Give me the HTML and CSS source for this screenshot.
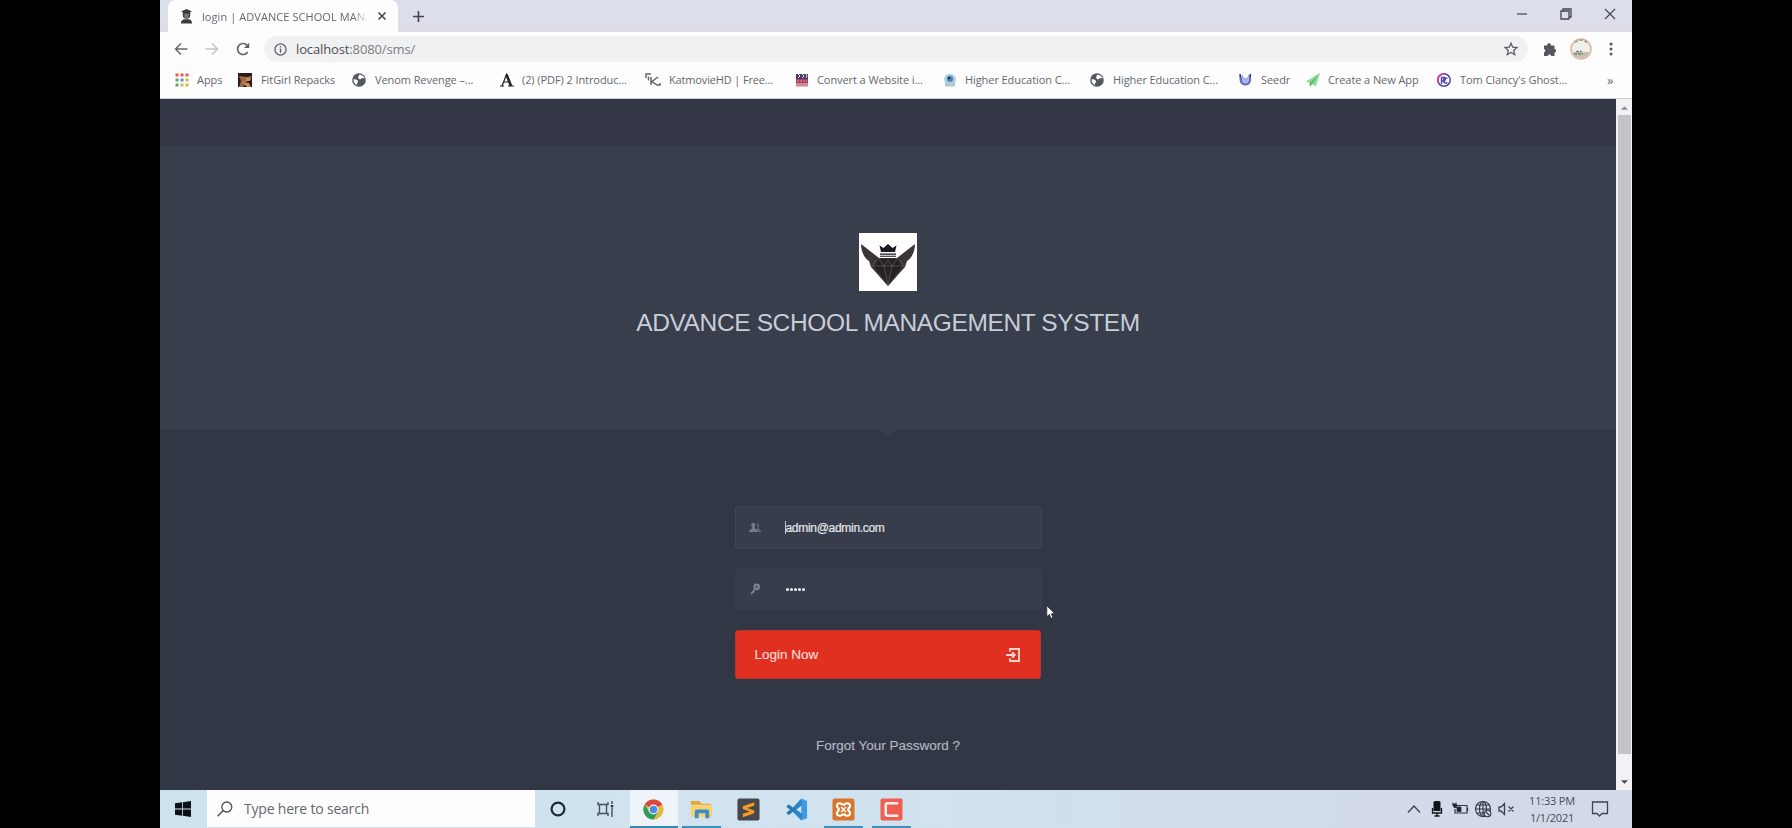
FILE: index.html
```html
<!DOCTYPE html>
<html lang="en">
<head>
<meta charset="utf-8">
<title>login | ADVANCE SCHOOL MANAGEMENT SYSTEM</title>
<link rel="stylesheet" href="styles.css">
</head>
<body>
<div class="desktop">
  <header class="tabstrip">
    <div class="tab">
      <svg class="tab-icon" viewBox="0 0 14 16"><path fill="#3c3c40" d="M7 0l6 2.500-2 1V6.500a4 4 0 0 1-8 0V3.500L1 2.500zM1 15.500c0-3 2-4.500 4-4.500h4c2 0 4 1.500 4 4.500z"/><path fill="#77777b" d="M4.500 5h5v2.500a2.500 2.500 0 0 1-5 0z"/></svg>
      <span class="tab-title">login | ADVANCE SCHOOL MANA</span>
      <svg class="tab-close" viewBox="0 0 8 8"><path d="M.5.5l7 7M7.500.5l-7 7" stroke="#45464b" stroke-width="1.600"/></svg>
    </div>
    <svg class="new-tab" viewBox="0 0 12 12"><path d="M6 0v12M0 6h12" stroke="#45464b" stroke-width="1.800"/></svg>
    <div class="window-buttons">
      <svg viewBox="0 0 12 12"><path d="M1 6h10" stroke="#44464c" stroke-width="1.200"/></svg>
      <svg viewBox="0 0 12 12"><path d="M1 3h8v8H1zM3 3V1h8v8H9" fill="none" stroke="#44464c" stroke-width="1.300"/></svg>
      <svg viewBox="0 0 12 12"><path d="M1 1l10 10M11 1L1 11" stroke="#44464c" stroke-width="1.200"/></svg>
    </div>
  </header>

  <nav class="toolbar">
    <div class="nav-buttons">
      <svg viewBox="0 0 14 14"><path d="M13.500 7H1.500M7 1.500L1.500 7 7 12.500" fill="none" stroke="#66686c" stroke-width="1.500"/></svg>
      <svg viewBox="0 0 14 14"><path d="M.5 7h12M7 1.500L12.500 7 7 12.500" fill="none" stroke="#c3c4c8" stroke-width="1.500"/></svg>
      <svg viewBox="0 0 14 14"><path d="M11.700 10A5.500 5.500 0 1 1 11.300 3.500L12.500 5" fill="none" stroke="#5f6165" stroke-width="1.600"/><path d="M13.200.8v5.200H8z" fill="#5f6165"/></svg>
    </div>
    <div class="omnibox">
      <svg class="info" viewBox="0 0 14 14"><circle cx="7" cy="7" r="6" fill="none" stroke="#5f6165" stroke-width="1.400"/><path d="M7 6v4.500M7 3.400v1.500" stroke="#5f6165" stroke-width="1.500"/></svg>
      <span class="url"><b>localhost</b>:8080/sms/</span>
      <svg class="star" viewBox="0 0 14 14"><path d="M7 1.200l1.700 4 4.300.4-3.300 2.800 1 4.300L7 10.400l-3.700 2.300 1-4.300L1 5.600l4.300-.4z" fill="none" stroke="#5c5e63" stroke-width="1.300"/></svg>
    </div>
    <svg class="puzzle" viewBox="0 0 14 14"><path fill="#55575c" d="M1 3.500h3.300a1.800 1.800 0 1 1 3.500 0H11.500V7a1.700 1.700 0 1 1 0 3.400V14H8.300a1.800 1.800 0 0 0-3.500 0H1v-3.700a1.700 1.700 0 0 0 0-3.300z"/></svg>
    <svg class="avatar" viewBox="0 0 22 22"><circle cx="11" cy="11" r="10" fill="#eef0ec" stroke="#e0b592" stroke-width="1.500"/><path d="M2.500 14h17a9 9 0 0 1-17 0z" fill="#c2c0b6"/><path d="M4 16h9M6 13.500h6" stroke="#7b817c" stroke-width="1.300" stroke-dasharray="3 1"/><path d="M5 4.500A9 9 0 0 1 17 4.500" stroke="#8f989a" stroke-width="1.500" stroke-dasharray="3 2" fill="none"/></svg>
    <svg class="kebab" viewBox="0 0 4 14"><g fill="#55575c"><circle cx="2" cy="2" r="1.500"/><circle cx="2" cy="7" r="1.500"/><circle cx="2" cy="12" r="1.500"/></g></svg>
  </nav>

  <nav class="bookmarks">
    <a><svg viewBox="0 0 14 14"><path fill="#e0604f" d="M.5.5h3v3h-3zM5.500.5h3v3h-3zM10.500.5h3v3h-3z"/><path fill="#5ba377" d="M.5 5.500h3v3h-3z"/><path fill="#5a8fd0" d="M5.500 5.500h3v3h-3z"/><path fill="#e3b04a" d="M10.500 5.500h3v3h-3zM5.500 10.500h3v3h-3zM10.500 10.500h3v3h-3z"/><path fill="#5ba377" d="M.5 10.500h3v3h-3z"/></svg>Apps</a>
    <a class="wide-gap"><svg viewBox="0 0 14 14"><path fill="#2a1c18" d="M0 0h14v14H0z"/><path fill="#a06a46" d="M1 3l8 1 4-1v4l-5 2-3 5H1l2-6z"/><path fill="#c58c60" d="M8 5h4v3H8zM4 9l7 1 2 4H9z"/></svg>FitGirl Repacks</a>
    <a class="wide-gap"><svg viewBox="0 0 14 14"><circle cx="7" cy="7" r="6.800" fill="#55585d"/><path fill="#fff" d="M1.500 6.500c2-.5 4.500.5 4.500 2S4.500 10 5 12C3 11.500 1.300 9 1.500 6.500zM7 2c2-.6 5 1 5.500 3.500L10 5 8 6.500 6 5z"/></svg>Venom Revenge –...</a>
    <a><svg viewBox="0 0 14 14"><path d="M2 13L6.500 1.500 11 13M3.500 9h5M0 13h4M8 13h6" fill="none" stroke="#222" stroke-width="1.200"/><path d="M6.500 1.500L11 13" stroke="#222" stroke-width="2.600"/></svg>(2) (PDF) 2 Introduc...</a>
    <a class="wide-gap katmovie"><svg viewBox="0 0 14 14"><path d="M0 5V1h5M5 4v8M12 4L6 8.500l5 3.500h3v-2M2.500 3.500v4" fill="none" stroke="#66676b" stroke-width="1.500"/></svg>KatmovieHD | Free...</a>
    <a><svg viewBox="0 0 14 14"><path fill="#3d3a6d" d="M1 1h12v5H1z"/><path fill="#b53a56" d="M1 6h12v4H1z"/><path fill="#c88b9a" d="M1 10h12v3.500H1z"/><path d="M3 1l2 2-2 2M7 1l2 2-2 2M11 1l1 2-1 2" stroke="#e9ddea" fill="none"/><path d="M2 8h10" stroke="#d795a5" stroke-dasharray="2 1"/></svg>Convert a Website i...</a>
    <a><svg viewBox="0 0 14 14"><path d="M2 9h10v4.500H2z" fill="#b9c5c5"/><circle cx="7" cy="6.500" r="5.800" fill="#a7cfdf"/><circle cx="7" cy="6" r="3" fill="#5580ac"/><circle cx="6" cy="5" r="1.200" fill="#16305f"/></svg>Higher Education C...</a>
    <a class="wide-gap"><svg viewBox="0 0 14 14"><circle cx="7" cy="7" r="6.800" fill="#55585d"/><path fill="#fff" d="M1.500 6.500c2-.5 4.500.5 4.500 2S4.500 10 5 12C3 11.500 1.300 9 1.500 6.500zM7 2c2-.6 5 1 5.500 3.500L10 5 8 6.500 6 5z"/></svg>Higher Education C...</a>
    <a class="wide-gap"><svg viewBox="0 0 14 14"><path d="M2 1c-1.500 6 0 11.500 5.500 11.500S14 7 12.500 1L10.500 5h-6z" fill="#6d68b8"/><path d="M4 1.500h7V7a3.500 3.500 0 0 1-7 0z" fill="#a9b4ea"/><path d="M5 1h5v1.500a2.500 2.500 0 0 1-5 0z" fill="#fff"/><path d="M2 1l.5 3M12.500 1L12 4" stroke="#33345f" stroke-width="1.500"/></svg>Seedr</a>
    <a><svg viewBox="0 0 14 14"><path fill="#8fdc94" d="M14 0L0 8.500l3.500 1.500zM14 0L5 11l5 2z"/><path fill="#55b866" d="M14 0L3.500 10 4 14l2-3z"/></svg>Create a New App</a>
    <a class="wide-gap"><svg viewBox="0 0 14 14"><circle cx="7" cy="7" r="6.200" fill="#fff" stroke="#5b3fa0" stroke-width="1.500"/><path d="M1 9a6 6 0 0 1 5-8" stroke="#dc3f83" stroke-width="1.700" fill="none"/><path d="M4.500 11V4.500H7a1.800 1.800 0 0 1 0 3.500H5M10.500 5.500a2.500 2.500 0 1 0 0 4" stroke="#4840b4" stroke-width="1.400" fill="none"/></svg>Tom Clancy's Ghost...</a>
    <span class="more">»</span>
  </nav>

  <div class="viewport">
    <main class="login-page">
      <section class="login-header">
        <svg class="logo" viewBox="0 0 58 58"><path fill="#fff" d="M0 0h58v58H0z"/><path fill="#3a3638" d="M2 11l18 14h18L56 11c0 7-3 14-8 17l-2 6-17 19L12 34l-2-6C5 25 2 18 2 11z"/><path fill="#262124" d="M20 26h18l5 7-14 20-14-20z"/><path fill="#1c1922" d="M22 19l-1.500-6.500 4 2.500L29 11l4.500 4 4-2.500L36 19zM21 20.500h16v1.300H21zM21 22.800h16v.9H21z"/><path d="M13 33h32M20 26l5 7 4 19 4-19 5-7M17 27l-3 5M41 27l3 5M25 33l4-6 4 6" fill="none" stroke="#6a6567" stroke-width=".6"/></svg>
        <h1>ADVANCE SCHOOL MANAGEMENT SYSTEM</h1>
      </section>
      <form class="login-form">
        <div class="field focused">
          <svg viewBox="0 0 14 14"><g fill="#747a86"><path d="M9.300 1.500c1.800 0 2.400 1.500 2.200 3-.1 1.200-.8 1.800-.8 2.700 0 1.300 3.300 1.300 3.300 4.300h-1.600c-.3-2-3-2.600-3-3.700 1.200-1.300.9-4.800-.1-6.300z"/><path d="M5 1c2 0 2.600 1.600 2.400 3.300C7.300 5.600 6.600 6.200 6.600 7c0 1.500 4.600 1.500 4.600 4.800H0C0 8.500 3.600 8.500 3.600 7c0-.8-.7-1.400-.8-2.700C2.500 2.600 3 1 5 1z"/></g></svg>
          <span class="caret"></span><span class="value">admin@admin.com</span>
        </div>
        <div class="field">
          <svg viewBox="0 0 14 14"><circle cx="9" cy="4.500" r="2.900" fill="#595f6c" stroke="#7d828e" stroke-width="2"/><path d="M7.500 6.500L2.500 13M4.500 9.500l1.500 1.500" stroke="#7d828e" stroke-width="2"/></svg>
          <span class="dots"><i></i><i></i><i></i><i></i><i></i></span>
        </div>
        <div class="button">
          <span>Login Now</span>
          <svg viewBox="0 0 14 14"><path d="M4 3.500V1h9v12H4v-2.500M0 7h8.500M6 4.300L8.800 7 6 9.700" fill="none" stroke="#fbd3cd" stroke-width="1.900"/></svg>
        </div>
      </form>
      <a class="forgot">Forgot Your Password ?</a>
    </main>
    <div class="scrollbar">
      <svg viewBox="0 0 8 4"><path d="M0 4l4-4 4 4z" fill="#8d8d91"/></svg>
      <div class="thumb"></div>
      <svg viewBox="0 0 8 4"><path d="M0 0l4 4 4-4z" fill="#4c4c50"/></svg>
    </div>
  </div>

  <footer class="taskbar">
    <div class="start"><svg viewBox="0 0 16 16"><path fill="#0c0f14" d="M0 2.300l7-1v6.300H0zM7.800 1.200L16 0v7.600H7.800zM0 8.400h7v6.300l-7-1zM7.800 8.400H16V16l-8.200-1.200z"/></svg></div>
    <div class="search">
      <svg viewBox="0 0 16 16"><circle cx="9.800" cy="6" r="5" fill="none" stroke="#4c4f54" stroke-width="1.300"/><path d="M6.200 9.600L.6 15.300" stroke="#4c4f54" stroke-width="1.400"/></svg>
      <span>Type here to search</span>
    </div>
    <div class="app"><svg class="small" viewBox="0 0 16 16"><circle cx="8" cy="8" r="6.400" fill="none" stroke="#1e2933" stroke-width="2.200"/></svg></div>
    <div class="app"><svg class="small" viewBox="0 0 16 16"><path d="M0 1v2.500h10V1M0 15v-2.500h10V15M1.500 3.500v9h7v-9M14 0v3M14 7v9" fill="none" stroke="#45505a" stroke-width="1.400"/><path d="M12.800 4h2.400v2.400h-2.400z" fill="#26313b"/></svg></div>
    <div class="app active"><svg viewBox="0 0 24 24"><circle cx="12" cy="12" r="10.500" fill="#e4b83f"/><path fill="#d94a3c" d="M12 12L2.900 6.750A10.500 10.500 0 0 1 21.100 6.750z"/><path fill="#2f9a5b" d="M2.900 6.750A10.500 10.500 0 0 0 12 22.500L16.500 14.500 12 12 7.500 14.500z"/><path fill="#d94a3c" d="M12 6.750h9.100L12 10z"/><circle cx="12" cy="12" r="5.200" fill="#f2f3f5"/><circle cx="12" cy="12" r="4" fill="#4a8be0"/></svg></div>
    <div class="app running"><svg viewBox="0 0 24 24"><path fill="#e0a53c" d="M1 3h9l2 3h10v6H1z"/><path fill="#f7d377" d="M1 7h22v13H1z"/><path fill="#3f8ec2" d="M5 21v-7q0-2 2-2h11q2 0 2 2v7h-4v-5H9v5z"/></svg></div>
    <div class="app"><svg viewBox="0 0 24 24"><rect x=".5" y=".5" width="23" height="23" rx="2" fill="#45474a"/><path fill="#f49b26" d="M6 8.500l12-4V8l-7.500 2.500L18 13v3L6 20v-3.500l7.500-2.500L6 11.500z"/></svg></div>
    <div class="app"><svg viewBox="0 0 24 24"><path d="M18 5L2.500 16.500M18 19L2.500 8" stroke="#2878b8" stroke-width="3.600"/><path fill="#3f9be0" d="M17 .5l6 2.500v18l-6 2.500z"/><path fill="#2b85cc" d="M17 .5L9 9l2.500 3L18 6.500zM17 23.500L9 15l2.500-3 6.500 5.500z"/></svg></div>
    <div class="app running"><svg viewBox="0 0 24 24"><rect x=".5" y=".5" width="23" height="23" rx="2.500" fill="#d9762b"/><path d="M8 5.500c2 0 2 1.500 4 1.500s2-1.500 4-1.500c3 0 3.500 3 2 4.500-1.500 1.300-1.500 2.700 0 4 1.500 1.500 1 4.500-2 4.500-2 0-2-1.500-4-1.500s-2 1.500-4 1.500c-3 0-3.500-3-2-4.500 1.500-1.300 1.500-2.700 0-4-1.500-1.500-1-4.500 2-4.500z" fill="none" stroke="#fff" stroke-width="2.300"/><path d="M9.500 9.500l5 5M14.500 9.500l-5 5" stroke="#fff" stroke-width="1.500"/></svg></div>
    <div class="app running"><svg viewBox="0 0 24 24"><rect x=".5" y=".5" width="23" height="23" rx="2" fill="#ee5f52"/><path d="M19 5.500H8Q6 5.500 6 7.500v9q0 2 2 2h11" fill="none" stroke="#fff0ed" stroke-width="2.600"/></svg></div>
    <div class="tray">
      <svg viewBox="0 0 18 18"><path d="M3 12.500L9 6l6 6.500" fill="none" stroke="#3e444f" stroke-width="1.400"/></svg>
      <svg viewBox="0 0 18 18"><path d="M5.500 2.500Q5.500 1 7 1h4Q12.500 1 12.500 2.500V11h-7z" fill="#11141a"/><path d="M4.500 8v5h9V8M9 13v3.500M6.500 16h5" fill="none" stroke="#11141a" stroke-width="1.300"/></svg>
      <svg viewBox="0 0 18 18"><path d="M6 5.500h10v7.500H4V9M16.500 8v3" fill="none" stroke="#2e343e" stroke-width="1.200"/><path d="M6 7h4v4.500H6zM1.500 4h4v3.500H3zM2 2.500V4M5 2.500V4" fill="#20252e" stroke="#20252e" stroke-width=".8"/></svg>
      <svg viewBox="0 0 18 18"><g fill="none" stroke="#2e343e" stroke-width="1.100"><circle cx="9" cy="9" r="7.500"/><ellipse cx="9" cy="9" rx="3.500" ry="7.500"/><path d="M9 1.500v15M1.500 9h15M2.500 5h13M2.500 13h13"/><circle cx="13.500" cy="13.500" r="3.300" fill="#d3d9e8"/><path d="M11.500 11.500l4 4"/></g></svg>
      <svg viewBox="0 0 18 18"><path d="M2 7v4h2l3.500 3.500v-11L4 7zM11.500 6.500l5 5M16.500 6.500l-5 5" fill="none" stroke="#3e444f" stroke-width="1.300"/></svg>
    </div>
    <div class="clock"><span>11:33 PM</span><span>1/1/2021</span></div>
    <div class="notify"><svg viewBox="0 0 18 18"><path d="M1.500 2h15v11.500H11L8.500 16 6 13.500H1.500z" fill="none" stroke="#3e444f" stroke-width="1.300"/></svg></div>
  </footer>

  <svg class="pointer" viewBox="0 0 12 18"><path d="M1 1v13l3-2.800L6 16l2.300-1-2-4.600h4.200z" fill="#fff" stroke="#20232c" stroke-width=".8"/></svg>
</div>
</body>
</html>
```
FILE: styles.css
```css
* { box-sizing: border-box; }
body { margin: 0; background: #000; font-family: "Open Sans", "Noto Sans", sans-serif; }
svg { display: block; flex: none; overflow: visible; }
.desktop { position: relative; width: 1472px; height: 828px; margin-left: 160px; display: flex; flex-direction: column; overflow: hidden; background: #fff; }

.tabstrip { height: 32px; flex: none; display: flex; align-items: center; padding-left: 8px; background: linear-gradient(#dbdeeb, #dcdeeb 60%, #dcdde3); }
.tab { width: 230px; height: 32px; display: flex; align-items: center; padding-left: 12px; background: #fdfdfe; border-radius: 8px 8px 0 0; }
.tab-icon { width: 13px; height: 15px; }
.tab-title { width: 165px; margin-left: 9px; overflow: hidden; white-space: nowrap; font-size: 11px; letter-spacing: .07px; color: #66676c; -webkit-mask-image: linear-gradient(90deg, #000 92%, transparent); mask-image: linear-gradient(90deg, #000 92%, transparent); }
.tab-close { width: 8px; height: 8px; margin-left: 11px; }
.new-tab { width: 11px; height: 11px; margin-left: 15px; }
.window-buttons { margin-left: auto; display: flex; gap: 32px; padding: 0 16px 4px 0; }
.window-buttons svg { width: 12px; height: 12px; }

.toolbar { height: 34px; flex: none; display: flex; align-items: center; padding-left: 14px; background: #fdfdfe; }
.nav-buttons { width: 90px; display: flex; gap: 17px; }
.nav-buttons svg { width: 14px; height: 14px; }
.omnibox { width: 1264px; height: 26px; display: flex; align-items: center; padding: 0 10px; border-radius: 13px; background: #f0f1f3; }
.info { width: 13px; height: 13px; }
.url { margin-left: 9px; font-size: 13px; line-height: 18px; letter-spacing: -.13px; color: #7a7b80; }
.url b { font-weight: 400; color: #4b4c50; }
.star { width: 14px; height: 14px; margin-left: auto; }
.puzzle { width: 14px; height: 14px; margin-left: 15px; }
.avatar { width: 22px; height: 22px; margin-left: 13px; }
.kebab { width: 4px; height: 14px; margin-left: 17px; }

.bookmarks { height: 33px; flex: none; display: grid; grid-template-columns: 63px 114px 148px 146px 149px 148px 147px 148px 68px 131px 170px 20px; align-items: center; padding: 0 0 5px 15px; border-bottom: 1px solid #c9cdd4; background: #fdfdfe; font-size: 11px; color: #66676c; }
.bookmarks a { display: flex; align-items: center; gap: 8px; white-space: nowrap; letter-spacing: -.08px; }
.bookmarks .wide-gap { gap: 9px; }
.bookmarks .katmovie { letter-spacing: -.15px; }
.bookmarks svg { width: 14px; height: 14px; }
.more { font-size: 13px; line-height: 14px; }

.viewport { height: 691px; flex: none; display: flex; }
.login-page { width: 1456px; padding-top: 47px; background: linear-gradient(#343745 0, #343745 47px, #303643 48px, #323745); font-family: "Liberation Sans", Arial, sans-serif; display: flex; flex-direction: column; align-items: center; }
.login-header { position: relative; width: 100%; height: 284px; flex: none; padding-top: 87px; display: flex; flex-direction: column; align-items: center; background: #383e4b; }
.login-header::after { content: ""; position: absolute; left: 718px; top: 284px; border: 10px solid transparent; border-top: 8px solid #363c49; border-bottom: 0; }
.logo { width: 58px; height: 58px; }
h1 { margin: 17px 0 0; font-size: 24.500px; line-height: 30px; letter-spacing: -.37px; font-weight: 400; color: #c8cdd8; white-space: nowrap; }
.login-form { width: 307px; margin-top: 76px; display: flex; flex-direction: column; }
.field { height: 42px; margin-bottom: 20px; padding-left: 13px; display: flex; align-items: center; background: #383d4b; border-radius: 3px; border: 1px solid #373c49; }
.field.focused { height: 43px; margin-bottom: 19px; border-color: #404551; }
.field svg { width: 12px; height: 12px; }
.caret { width: 1px; height: 13px; margin-left: 24px; background: #c5c8d0; }
.value { font-size: 12px; letter-spacing: -.3px; color: #e4e6ec; -webkit-text-stroke: .2px #e4e6ec; }
.dots { display: flex; gap: 1px; margin-left: 25px; }
.dots i { width: 3px; height: 3px; border-radius: 50%; background: #f0f1f5; }
.button { width: 306px; height: 49px; display: flex; align-items: center; justify-content: space-between; padding: 0 20px 0 19px; background: #e1301f; border: 1px solid #b93431; border-radius: 3px; color: #fbdad5; font-size: 13.500px; -webkit-text-stroke: .2px #fbdad5; }
.button svg { width: 14px; height: 14px; }
.forgot { margin-top: 59px; font-size: 13.500px; line-height: 16px; color: #b3b8c4; -webkit-text-stroke: .15px #b3b8c4; }

.scrollbar { width: 16px; display: flex; flex-direction: column; align-items: center; padding: 7px 0 6px; background: #f2f2f4; }
.scrollbar svg { width: 7px; height: 4px; }
.thumb { width: 13px; height: 639px; margin: 5px 0 26px; background: #c4c4c8; }

.taskbar { height: 38px; flex: none; display: flex; background: linear-gradient(90deg, #cce3ee, #d1e2ef 50%, #d3d9e9 90%, #d4d9e7); }
.start { width: 47px; display: grid; place-items: center; padding-right: 2px; }
.start svg { width: 16px; height: 16px; }
.search { width: 328px; height: 37px; display: flex; align-items: center; padding-left: 10px; background: #fdfdfe; color: #66686d; font-size: 14px; letter-spacing: -.2px; }
.search svg { width: 16px; height: 16px; margin-right: 11px; }
.app { width: 47.500px; height: 38px; display: grid; place-items: center; }
.app svg { width: 23px; height: 23px; }
.app .small { width: 16px; height: 16px; margin-right: 1px; }
.app.active { background: #edf3f9; border-bottom: 2px solid #3388b8; padding-top: 2px; }
.app.running { background: linear-gradient(#3c8fbc, #3c8fbc) center bottom / 39px 2px no-repeat; }
.tray { margin-left: auto; display: flex; align-items: center; gap: 5px; }
.tray svg { width: 18px; height: 18px; }
.clock { width: 74px; display: flex; flex-direction: column; align-items: center; justify-content: center; font-size: 11px; line-height: 17.500px; color: #464c58; letter-spacing: -.2px; }
.notify { width: 41px; display: flex; align-items: center; margin-left: 2px; }
.notify svg { width: 18px; height: 18px; }
.pointer { position: absolute; left: 886px; top: 605px; width: 10px; height: 15px; }
```
